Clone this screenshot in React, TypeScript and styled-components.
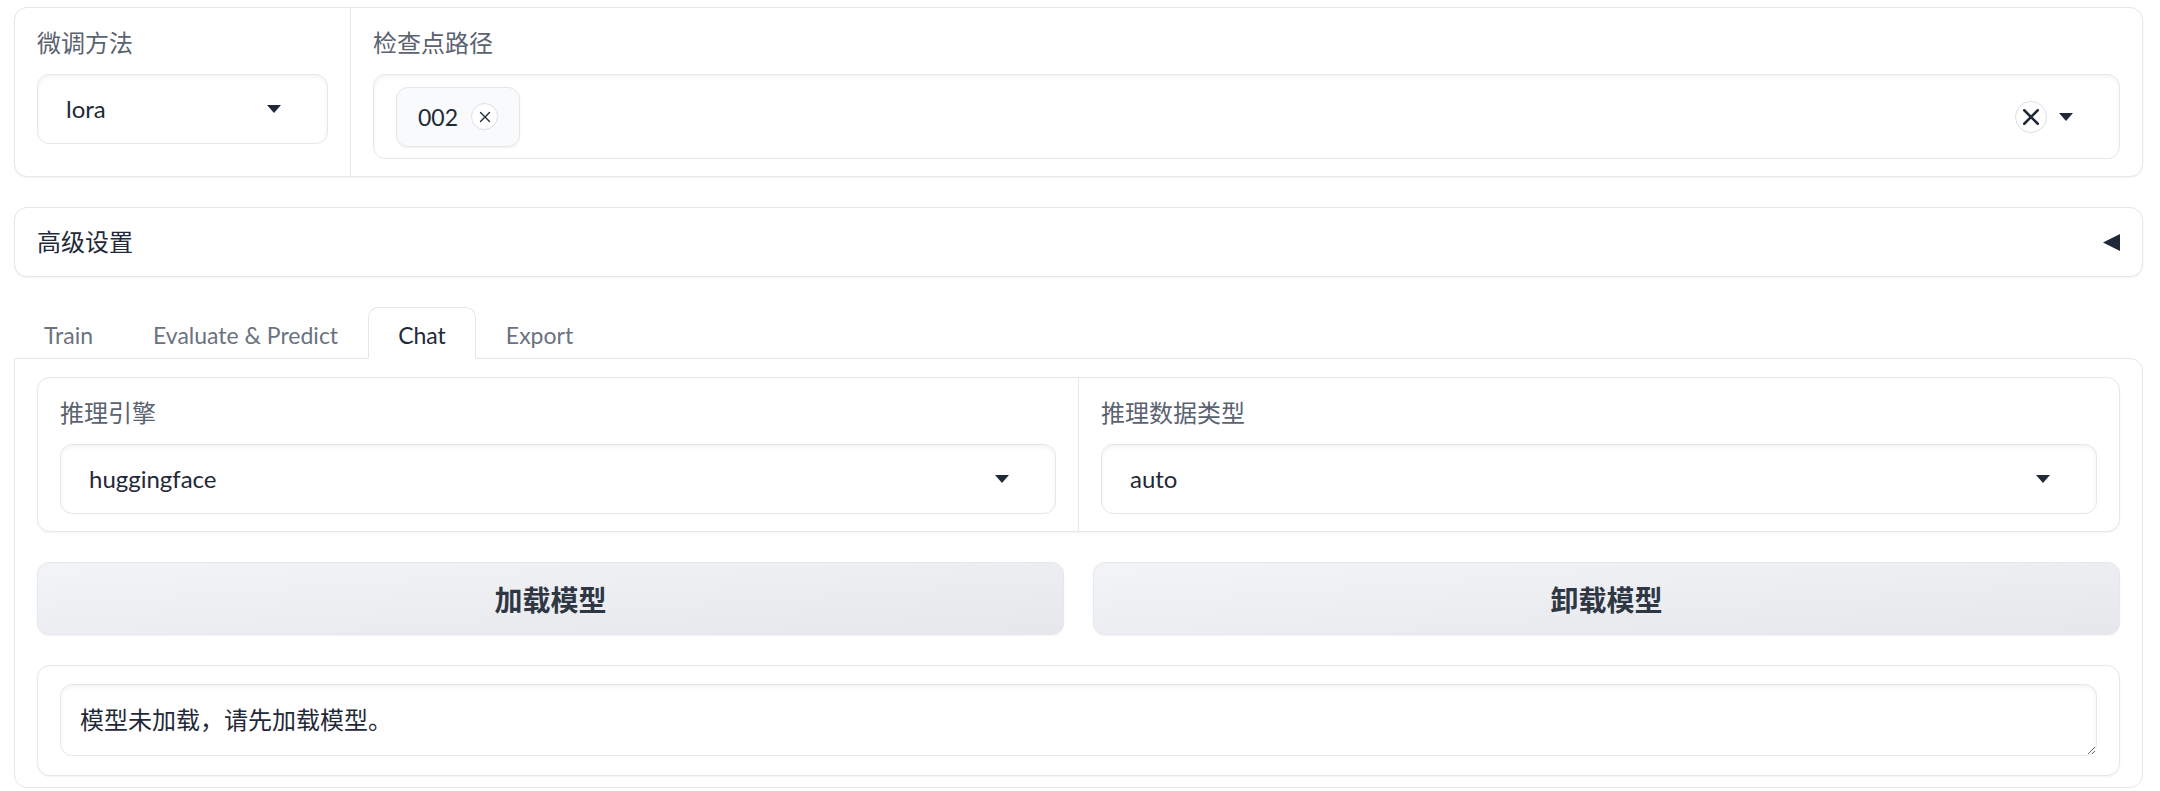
import React from "react";
import styled, { createGlobalStyle } from "styled-components";

const GlobalStyle = createGlobalStyle`
  html, body { margin: 0; padding: 0; background: #ffffff; }
  body {
    font-family: Lato, "Noto Sans CJK SC", "Noto Sans", sans-serif;
    color: #1f2937;
  }
  * { box-sizing: border-box; }
`;

const Page = styled.div`
  display: flex;
  flex-direction: column;
  gap: 30px;
  padding: 7px 17px 0 14px;
`;

const Block = styled.div`
  display: flex;
  border: 1px solid #e5e7eb;
  border-radius: 13px;
  background: #ffffff;
  box-shadow: 0 1px 2px rgba(0, 0, 0, 0.05);
`;

const Field = styled.div<{ $width?: number; $divider?: boolean }>`
  display: flex;
  flex-direction: column;
  gap: 13px;
  padding: 17px 22px;
  min-width: 0;
  flex: ${(p) => (p.$width ? `0 0 ${p.$width}px` : "1 1 0")};
  border-right: ${(p) => (p.$divider ? "1px solid #e5e7eb" : "none")};
`;

const Label = styled.span`
  font-size: 24px;
  line-height: 36px;
  color: #5b6270;
`;

const Select = styled.div<{ $tall?: boolean; $left?: number }>`
  display: flex;
  align-items: center;
  gap: 12px;
  height: ${(p) => (p.$tall ? 85 : 70)}px;
  padding: 0 46px 0 ${(p) => p.$left ?? 28}px;
  border: 1px solid #e5e7eb;
  border-radius: 12px;
  background: #ffffff;
  box-shadow: inset 0 2px 4px rgba(0, 0, 0, 0.05);
`;

const Value = styled.span`
  flex: 1;
  font-size: 24px;
  line-height: 36px;
  color: #1f2937;
`;

const Chip = styled.div`
  display: flex;
  align-items: center;
  gap: 13px;
  height: 60px;
  padding: 0 21px 0 21px;
  border: 1px solid #e5e7eb;
  border-radius: 12px;
  background: #f9fafb;
  box-shadow: 0 1px 2px rgba(0, 0, 0, 0.06);
  font-size: 23px;
  color: #1f2937;
`;

const Spacer = styled.div`
  flex: 1;
`;

const RoundIcon = styled.span<{ $size: number }>`
  display: inline-flex;
  align-items: center;
  justify-content: center;
  width: ${(p) => p.$size}px;
  height: ${(p) => p.$size}px;
  border: 1px solid #dcdfe4;
  border-radius: 50%;
  background: #ffffff;
`;

const Accordion = styled.div`
  display: flex;
  align-items: center;
  justify-content: space-between;
  height: 70px;
  padding: 0 22px;
  border: 1px solid #e5e7eb;
  border-radius: 13px;
  background: #ffffff;
  box-shadow: 0 1px 2px rgba(0, 0, 0, 0.05);
`;

const AccTitle = styled.span`
  font-size: 24px;
  line-height: 36px;
  color: #1f2937;
`;

const Tabs = styled.div`
  display: flex;
  flex-direction: column;
`;

const TabBar = styled.div`
  display: flex;
  height: 51px;
`;

const Tab = styled.div<{ $active?: boolean }>`
  display: flex;
  align-items: center;
  padding: 3px 29px 0;
  height: 52px;
  margin-bottom: -1px;
  font-size: 23px;
  color: ${(p) => (p.$active ? "#1f2937" : "#6b7280")};
  background: ${(p) => (p.$active ? "#ffffff" : "transparent")};
  border: 1px solid ${(p) => (p.$active ? "#e5e7eb" : "transparent")};
  border-bottom: 1px solid ${(p) => (p.$active ? "#ffffff" : "transparent")};
  border-radius: 10px 10px 0 0;
  z-index: 1;
`;

const Panel = styled.div`
  display: flex;
  flex-direction: column;
  gap: 30px;
  padding: 18px 22px 11px;
  border: 1px solid #e5e7eb;
  border-radius: 0 13px 13px 13px;
`;

const ButtonRow = styled.div`
  display: flex;
  gap: 29px;
`;

const Button = styled.button`
  flex: 1 1 0;
  height: 73px;
  border: 1px solid #e5e7eb;
  border-radius: 12px;
  background: linear-gradient(to bottom right, #f3f4f6, #e5e7eb);
  box-shadow: 0 1px 2px rgba(0, 0, 0, 0.05);
  font-family: Lato, "Noto Sans CJK SC", sans-serif;
  font-size: 28px;
  font-weight: 700;
  color: #2f3744;
  cursor: pointer;
`;

const TextBlock = styled.div`
  display: flex;
  flex-direction: column;
  padding: 18px 22px 19px;
  border: 1px solid #e5e7eb;
  border-radius: 13px;
  background: #ffffff;
  box-shadow: 0 1px 2px rgba(0, 0, 0, 0.05);
`;

const TextArea = styled.textarea`
  display: block;
  width: 100%;
  height: 72px;
  padding: 17px 19px;
  border: 1px solid #e5e7eb;
  border-radius: 12px;
  box-shadow: inset 0 2px 4px rgba(0, 0, 0, 0.05);
  font-family: Lato, "Noto Sans CJK SC", sans-serif;
  font-size: 24px;
  line-height: 36px;
  color: #1f2937;
  outline: none;
  resize: vertical;
  overflow: hidden;
`;

const Caret = () => (
  <svg width="14" height="8" viewBox="0 0 14 8">
    <path d="M0 0H14L7 8Z" fill="#1f2937" />
  </svg>
);

const LeftTriangle = () => (
  <svg width="17" height="17" viewBox="0 0 17 17">
    <path d="M17 0V17L0 8.5Z" fill="#1f2937" />
  </svg>
);

const Cross = ({ size, stroke }: { size: number; stroke: number }) => (
  <svg width={size} height={size} viewBox="0 0 16 16">
    <path d="M2 2L14 14M14 2L2 14" stroke="#1f2937" strokeWidth={stroke} strokeLinecap="round" />
  </svg>
);

export default function App() {
  return (
    <>
      <GlobalStyle />
      <Page>
        <Block>
          <Field $width={336} $divider>
            <Label>微调方法</Label>
            <Select>
              <Value>lora</Value>
              <Caret />
            </Select>
          </Field>
          <Field>
            <Label>检查点路径</Label>
            <Select $tall $left={22}>
              <Chip>
                002
                <RoundIcon $size={27}>
                  <Cross size={12} stroke={1.8} />
                </RoundIcon>
              </Chip>
              <Spacer />
              <RoundIcon $size={32}>
                <Cross size={18} stroke={2.2} />
              </RoundIcon>
              <Caret />
            </Select>
          </Field>
        </Block>

        <Accordion>
          <AccTitle>高级设置</AccTitle>
          <LeftTriangle />
        </Accordion>

        <Tabs>
          <TabBar>
            <Tab>Train</Tab>
            <Tab>Evaluate &amp; Predict</Tab>
            <Tab $active>Chat</Tab>
            <Tab>Export</Tab>
          </TabBar>
          <Panel>
            <Block>
              <Field $divider>
                <Label>推理引擎</Label>
                <Select>
                  <Value>huggingface</Value>
                  <Caret />
                </Select>
              </Field>
              <Field>
                <Label>推理数据类型</Label>
                <Select>
                  <Value>auto</Value>
                  <Caret />
                </Select>
              </Field>
            </Block>
            <ButtonRow>
              <Button>加载模型</Button>
              <Button>卸载模型</Button>
            </ButtonRow>
            <TextBlock>
              <TextArea readOnly value="模型未加载，请先加载模型。" />
            </TextBlock>
          </Panel>
        </Tabs>
      </Page>
    </>
  );
}
